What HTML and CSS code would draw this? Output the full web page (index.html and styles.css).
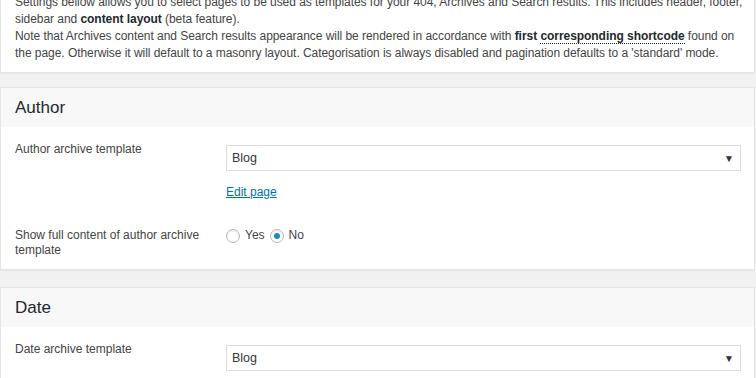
FILE: index.html
```html
<!DOCTYPE html>
<html lang="en">
<head>
    <meta charset="UTF-8">
    <meta name="viewport" content="width=device-width, initial-scale=1.0">
    <title>Templates</title>
    <link rel="stylesheet" href="styles.css">
</head>
<body>
    <div class="page">
        <div class="card intro">
            <p>Settings bellow allows you to select pages to be used as templates for your 404, Archives and Search results. This includes header, footer, sidebar and <strong>content layout</strong> (beta feature).<br>
            Note that Archives content and Search results appearance will be rendered in accordance with <strong>first <span class="dotted">corresponding shortcode</span></strong> found on the page. Otherwise it will default to a masonry layout. Categorisation is always disabled and pagination defaults to a 'standard' mode.</p>
        </div>

        <div class="card section">
            <div class="card-head">Author</div>
            <div class="card-body">
                <div class="row">
                    <div class="label">Author archive template</div>
                    <div class="field">
                        <div class="select">Blog <span class="arrow">&#9660;</span></div>
                        <a class="edit-link" href="#">Edit page</a>
                    </div>
                </div>
                <div class="row">
                    <div class="label">Show full content of author archive template</div>
                    <div class="field radios">
                        <label class="radio"><span class="circle"></span>Yes</label>
                        <label class="radio"><span class="circle checked"></span>No</label>
                    </div>
                </div>
            </div>
        </div>

        <div class="card section">
            <div class="card-head">Date</div>
            <div class="card-body">
                <div class="row">
                    <div class="label">Date archive template</div>
                    <div class="field">
                        <div class="select">Blog <span class="arrow">&#9660;</span></div>
                    </div>
                </div>
            </div>
        </div>
    </div>
</body>
</html>
```

FILE: styles.css
```css
body, html {
    margin: 0;
    padding: 0;
    background: #f1f1f1;
    font-family: "Liberation Sans", Arial, sans-serif;
    font-size: 12px;
    color: #444;
}
.page {
    display: flex;
    flex-direction: column;
    margin-top: -18px;
    padding-right: 1px;
}
.card {
    background: #fff;
    border: 1px solid #e5e5e5;
    box-shadow: 0 1px 1px rgba(0,0,0,0.04);
}
.intro {
    margin-bottom: 14px;
}
.section {
    margin-bottom: 17px;
}
.intro p {
    margin: 0;
    padding: 11px 4px 10px 14px;
    line-height: 17px;
    letter-spacing: -0.05px;
}
.intro strong {
    color: #23282d;
}
.dotted {
    border-bottom: 1px dotted #23282d;
}
.card-head {
    background: #f8f8f8;
    height: 39px;
    line-height: 40px;
    padding: 0 14px;
    font-size: 17px;
    color: #23282d;
}
.card-body {
    padding: 15px 13px 0 14px;
}
.row {
    display: flex;
    padding-bottom: 11px;
}
.row + .row {
    padding-top: 17px;
}
.label {
    width: 198px;
    padding-right: 13px;
    line-height: 15px;
}
.field {
    flex: 1;
    padding-top: 3px;
}
.select {
    height: 24px;
    line-height: 25px;
    border: 1px solid #ddd;
    padding: 0 5px;
    position: relative;
    font-size: 12.5px;
    color: #32373c;
}
.arrow {
    position: absolute;
    right: 6px;
    top: 0;
    font-size: 10px;
    color: #333;
}
.edit-link {
    display: inline-block;
    margin-top: 14px;
    line-height: 15px;
    color: #0073aa;
    text-decoration: underline;
}
.radios {
    display: flex;
    flex: none;
    gap: 5px;
    align-items: center;
    align-self: flex-start;
    padding-top: 0;
}
.radio {
    display: flex;
    align-items: center;
    gap: 5px;
    line-height: 15px;
}
.circle {
    width: 12px;
    height: 12px;
    border: 1px solid #b4b9be;
    border-radius: 50%;
    box-shadow: inset 0 1px 2px rgba(0,0,0,0.1);
    position: relative;
}
.circle.checked::after {
    content: "";
    position: absolute;
    left: 3px;
    top: 3px;
    width: 6px;
    height: 6px;
    border-radius: 50%;
    background: #1e8cbe;
}
```
